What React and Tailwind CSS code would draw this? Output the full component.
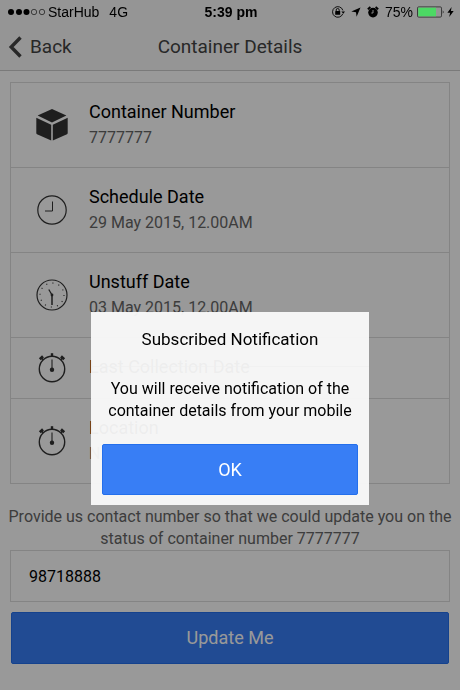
import React, { useState } from 'react';

const CubeIcon = () => (
  <svg viewBox="0 0 34 34" className="size-[34px] -my-[3px] self-center" fill="#333" aria-hidden="true">
    <path d="M17 1 31.4 7.6 17 14.4 2.6 7.6Z" />
    <path d="M1.3 9.7 16.2 16.8V32.6L2 26.2Q1.3 25.8 1.3 25Z" />
    <path d="M32.7 9.7 17.8 16.8V32.6L32 26.2Q32.7 25.8 32.7 25Z" />
  </svg>
);

const ClockIcon = () => (
  <svg viewBox="0 0 34 34" className="size-[34px] -my-[3px] self-center" fill="none" stroke="#333" aria-hidden="true">
    <circle cx="17" cy="17" r="14.2" strokeWidth="1.2" />
    <path d="M17.5 8.5V18H10" strokeWidth="1" />
  </svg>
);

const DialIcon = () => (
  <svg viewBox="0 0 34 34" className="size-[34px] -my-[3px] self-center" fill="none" stroke="#333" aria-hidden="true">
    <circle cx="17" cy="17" r="15" strokeWidth="1.2" />
    <circle cx="17" cy="17" r="12" strokeWidth="1.1" strokeDasharray="1.1 5.183" />
    <path d="M17 16.5V27" strokeWidth="1.5" />
    <path d="M17 17 13.8 11.5" strokeWidth="1.3" />
    <circle cx="17" cy="17" r="1.4" fill="#333" stroke="none" />
  </svg>
);

const StopwatchIcon = () => (
  <svg viewBox="0 0 34 34" className="size-[34px] -my-[3px] self-center" fill="none" stroke="#333" aria-hidden="true">
    <circle cx="17" cy="18" r="12.7" strokeWidth="1.4" />
    <path d="M17 8.5V18" strokeWidth="1.1" />
    <circle cx="17" cy="18.8" r="2.2" fill="#333" stroke="none" />
    <path d="M17 2.2V5.5" strokeWidth="2.4" />
    <path d="M4.8 8.2 8 5.4M29.2 8.2 26 5.4" strokeWidth="2.8" />
    <path d="M6.4 6.8 8.4 9M27.6 6.8 25.6 9" strokeWidth="1.5" />
  </svg>
);

const details = [
  { id: 'number', icon: CubeIcon, title: 'Container Number', value: '7777777' },
  { id: 'schedule', icon: ClockIcon, title: 'Schedule Date', value: '29 May 2015, 12.00AM' },
  { id: 'unstuff', icon: DialIcon, title: 'Unstuff Date', value: '03 May 2015, 12.00AM' },
  { id: 'collection', icon: StopwatchIcon, title: 'Last Collection Date', value: '' },
  { id: 'location', icon: StopwatchIcon, title: 'Location', value: 'N/A' }
];

// Stays above the popup backdrop, so it is never dimmed
const StatusBar = () => (
  <div className="relative z-10 grid grid-cols-[1fr_auto_1fr] items-center h-6 pl-2 pr-1.5 font-['Liberation_Sans',sans-serif] text-sm leading-4 text-black">
    <div className="flex items-center">
      <svg viewBox="0 0 38 8" className="w-[38px] h-2" aria-hidden="true">
        <circle cx="3" cy="4" r="3" />
        <circle cx="11" cy="4" r="3" />
        <circle cx="18.5" cy="4" r="3" />
        <circle cx="26" cy="4" r="2.7" fill="none" stroke="#000" strokeWidth="0.6" />
        <circle cx="34" cy="4" r="2.7" fill="none" stroke="#000" strokeWidth="0.6" />
      </svg>
      <span className="ml-0.5">StarHub</span>
      <span className="ml-2.5">4G</span>
    </div>
    <span className="font-bold">5:39 pm</span>
    <div className="flex items-center justify-end">
      <svg viewBox="0 0 14 14" className="size-[14px] mr-1.5" aria-hidden="true">
        <path d="M11.8 8.8A5.3 5.3 0 1 1 11.9 5.4" fill="none" stroke="#000" strokeWidth="0.9" />
        <path d="M10.4 6.4H14L12.2 8.8Z" />
        <rect x="4.2" y="6" width="5" height="3.8" rx="0.4" />
        <path d="M5.2 6V5a1.5 1.5 0 0 1 3 0V6" fill="none" stroke="#000" strokeWidth="0.9" />
      </svg>
      <svg viewBox="0 0 10 10" className="size-[10px] mr-1.5" aria-hidden="true">
        <path d="M9.5 0.5 5.6 9.8 5 5.2 0.3 4.6Z" />
      </svg>
      <svg viewBox="0 0 12 12" className="size-3 mr-1.5" aria-hidden="true">
        <circle cx="6" cy="6.6" r="4.8" />
        <path d="M0.8 3.2 3.4 1M11.2 3.2 8.6 1" stroke="#000" strokeWidth="1.8" />
        <path d="M6 4V7H4.3" fill="none" stroke="#959595" strokeWidth="0.9" />
      </svg>
      <span>75%</span>
      <svg viewBox="0 0 28 12" className="w-7 h-3 ml-1" aria-hidden="true">
        <rect x="0.5" y="0.9" width="24" height="10.2" rx="1.2" fill="none" stroke="#000" strokeWidth="0.6" />
        <rect x="1.3" y="1.7" width="17.7" height="8.6" fill="#4cd964" />
        <path d="M25.8 4.2Q27.4 6 25.8 7.8Z" />
      </svg>
      <svg viewBox="0 0 7 10" className="w-[7px] h-[10px] ml-0.5" aria-hidden="true">
        <path d="M4.6 0 0.4 5.7H3.1L2.2 10 6.7 4.1H3.9Z" />
      </svg>
    </div>
  </div>
);

const DetailItem = ({ icon: Icon, title, value }) => (
  <li className="flex items-start gap-5 pl-6 pr-4 py-4 border-t border-[#ddd] first:border-t-0">
    <Icon />
    <div className="min-w-0">
      <h2 className="text-lg leading-[25px] text-black">{title}</h2>
      {value && <p className="text-base leading-[27px] text-[#666]">{value}</p>}
    </div>
  </li>
);

const NotificationPopup = ({ onClose }) => (
  <div className="fixed inset-0 flex items-center justify-center bg-black/40">
    <div
      role="dialog"
      aria-modal="true"
      aria-labelledby="popup-title"
      className="w-[278px] mt-[127px] bg-[#fafafa]/95 text-center text-black"
    >
      <h3 id="popup-title" className="py-4 text-[17px] leading-[22px] border-b border-[#eee]/60">
        Subscribed Notification
      </h3>
      <p className="px-2.5 py-[11px] text-base leading-[22px]">
        You will receive notification of the container details from your mobile
      </p>
      <div className="px-[11px] pt-[11px] pb-2.5">
        <button
          type="button"
          onClick={onClose}
          className="block w-full h-[51px] rounded-xs border border-[#246fec] bg-[#387ef5] text-lg text-white"
        >
          OK
        </button>
      </div>
    </div>
  </div>
);

const App = () => {
  const [phone, setPhone] = useState('98718888');
  const [popupOpen, setPopupOpen] = useState(true);

  return (
    <div className="min-h-screen bg-white font-[Roboto,sans-serif] antialiased">
      <header className="bg-[#f8f8f8] border-b border-[#ccc]">
        <StatusBar />
        <div className="grid grid-cols-[1fr_auto_1fr] items-center h-[46px] px-2 text-[#444]">
          <button type="button" className="flex items-center gap-2 justify-self-start text-[19px]">
            <svg viewBox="0 0 14 22" className="w-[14px] h-[22px]" fill="none" stroke="#444" strokeWidth="3.4" aria-hidden="true">
              <path d="M12.5 1.5 3.2 11 12.5 20.5" />
            </svg>
            Back
          </button>
          <h1 className="text-[19px]">Container Details</h1>
        </div>
      </header>

      <main className="px-2.5 pt-[11px] pb-6">
        <ul className="border border-[#ddd]">
          {details.map(item => (
            <DetailItem key={item.id} {...item} />
          ))}
        </ul>

        <form onSubmit={e => e.preventDefault()}>
          <label htmlFor="phone" className="block -mx-2 pt-[22px] text-center text-base leading-[22px] text-[#666]">
            Provide us contact number so that we could update you on the status of container number 7777777
          </label>
          <input
            id="phone"
            type="tel"
            value={phone}
            onChange={e => setPhone(e.target.value)}
            className="block w-full h-[52px] px-[18px] border border-[#ddd] bg-white text-base text-black"
          />
          <div className="px-px pt-2.5">
            <button
              type="submit"
              onClick={() => setPopupOpen(true)}
              className="block w-full h-[52px] rounded-xs border border-[#246fec] bg-[#387ef5] text-lg text-white"
            >
              Update Me
            </button>
          </div>
        </form>
      </main>

      {popupOpen && <NotificationPopup onClose={() => setPopupOpen(false)} />}
    </div>
  );
};

export default App;
